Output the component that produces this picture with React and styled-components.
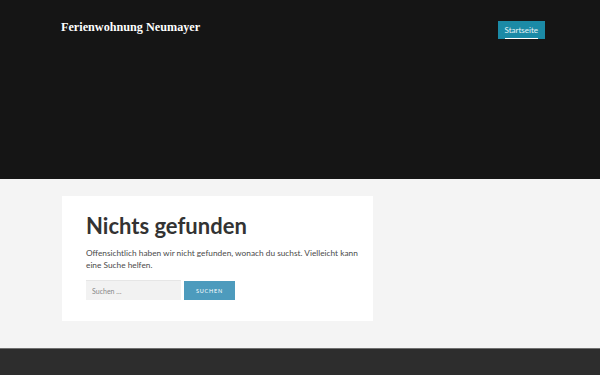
import React from 'react'
import styled, { createGlobalStyle } from 'styled-components'

const GlobalStyle = createGlobalStyle`
  html, body {
    margin: 0;
    padding: 0;
    height: 100%;
    background: #2d2d2d;
  }
  #root {
    height: 100%;
  }
  * {
    box-sizing: border-box;
  }
`

function App() {
    return (
        <Page>
            <GlobalStyle />
            <Header>
                <SiteTitle>Ferienwohnung Neumayer</SiteTitle>
                <Nav>
                    <NavItem active>Startseite</NavItem>
                </Nav>
            </Header>
            <Main>
                <Card>
                    <Heading>Nichts gefunden</Heading>
                    <Text>
                        Offensichtlich haben wir nicht gefunden, wonach du suchst. Vielleicht kann eine Suche helfen.
                    </Text>
                    <SearchForm onSubmit={(e) => e.preventDefault()}>
                        <SearchInput placeholder="Suchen …" />
                        <SearchButton type="submit">Suchen</SearchButton>
                    </SearchForm>
                </Card>
            </Main>
            <Footer />
        </Page>
    )
}

export default App

const Page = styled.div`
    display: flex;
    flex-direction: column;
    min-height: 100%;
    font-family: "Lato", "Open Sans", sans-serif;
`

const Header = styled.header`
    height: 179px;
    background-color: #151515;
    display: flex;
    justify-content: space-between;
    align-items: flex-start;
    padding: 19px 55px 0 61px;
`

const SiteTitle = styled.h1`
    margin: 0;
    color: #ffffff;
    font-family: "Liberation Serif", "DejaVu Serif", serif;
    font-weight: 700;
    font-size: 12.2px;
    line-height: 16px;
`

const Nav = styled.nav`
    display: flex;
    padding-top: 2px;
`

const NavItem = styled.a`
    position: relative;
    display: block;
    height: 18px;
    padding: 0 7px;
    background-color: ${(p) => (p.active ? '#1b8aa6' : 'transparent')};
    color: #e8f4f7;
    font-size: 8px;
    line-height: 18px;

    &::after {
        content: '';
        position: absolute;
        left: 7px;
        right: 7px;
        bottom: 0;
        height: 1px;
        background: #ffffff;
        display: ${(p) => (p.active ? 'block' : 'none')};
    }
`

const Main = styled.main`
    background-color: #f4f4f4;
    padding: 17px 0 27px 62px;
`

const Card = styled.article`
    width: 311px;
    height: 125px;
    background: #ffffff;
    padding: 17px 10px 0 24px;
`

const Heading = styled.h2`
    margin: 0;
    color: #333333;
    font-size: 22px;
    font-weight: 700;
    line-height: 26px;
`

const Text = styled.p`
    margin: 8px 0 0;
    color: #4a4a4a;
    font-size: 8.3px;
    line-height: 12px;
`

const SearchForm = styled.form`
    display: flex;
    align-items: flex-start;
    gap: 3px;
    margin-top: 9px;
`

const SearchInput = styled.input`
    width: 95px;
    height: 20px;
    border: none;
    border-top: 1px solid #e6e6e6;
    background: #f2f2f2;
    padding: 0 6px;
    font-family: inherit;
    font-size: 7px;
    color: #555;
    outline: none;

    &::placeholder {
        color: #888;
    }
`

const SearchButton = styled.button`
    width: 51px;
    height: 19px;
    margin-top: 1px;
    border: none;
    background: #4d9bbd;
    color: #ffffff;
    font-family: inherit;
    font-size: 5.5px;
    letter-spacing: 0.8px;
    text-transform: uppercase;
    padding: 0;
`

const Footer = styled.footer`
    flex: 1;
    background: #2d2d2d;
    border-top: 1px solid #707070;
`
